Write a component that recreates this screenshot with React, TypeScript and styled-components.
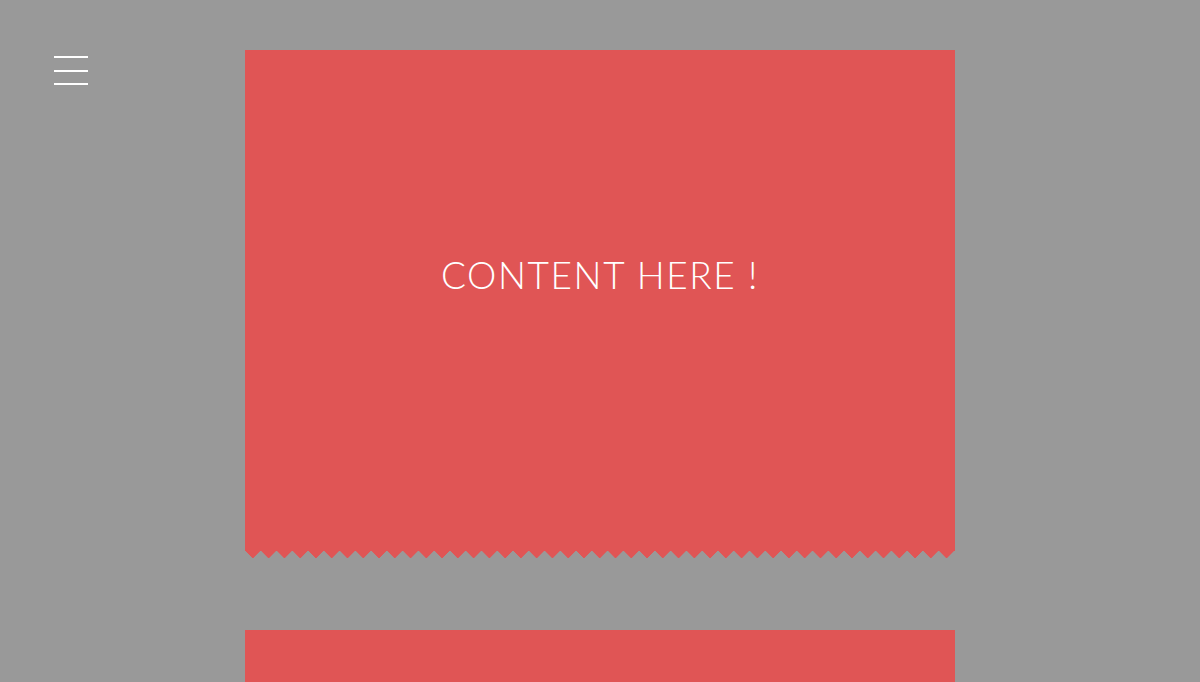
import React from "react";
import styled, { createGlobalStyle } from "styled-components";

const RED = "#e05555";

const GlobalStyle = createGlobalStyle`
  html, body {
    margin: 0;
    padding: 0;
    background: #999999;
    font-family: "Lato", "Open Sans", sans-serif;
  }
`;

const StyledPage = styled.main`
  display: flex;
  flex-direction: column;
  align-items: center;
  gap: 80px;
  padding-top: 50px;
  height: 682px;
  overflow: hidden;
  box-sizing: border-box;
`;

const StyledMenuButton = styled.button`
  position: fixed;
  top: 56px;
  left: 54px;
  width: 34px;
  padding: 0;
  border: 0;
  background: none;
  display: flex;
  flex-direction: column;
  gap: 11.5px;
  cursor: pointer;

  span {
    display: block;
    height: 2px;
    background: #fff;
  }
`;

const StyledCard = styled.section<{ $zigzag?: boolean }>`
  position: relative;
  flex-shrink: 0;
  width: 710px;
  height: 500px;
  background: ${RED};
  color: #fff;
  display: flex;
  justify-content: center;
  padding-top: 206px;
  box-sizing: border-box;

  &::after {
    content: "";
    display: ${(p) => (p.$zigzag ? "block" : "none")};
    position: absolute;
    left: 0;
    right: 0;
    top: 100%;
    height: 8px;
    background: conic-gradient(from -45deg at 50% 100%, ${RED} 90deg, transparent 0)
      repeat-x 0 0 / 15.78px 8px;
  }
`;

const StyledTitle = styled.h1`
  margin: 0;
  font-size: 37px;
  line-height: 1;
  font-weight: 300;
  letter-spacing: 1.6px;
  height: 37px;
`;

export default function App() {
  return (
    <>
      <GlobalStyle />
      <StyledMenuButton aria-label="menu">
        <span />
        <span />
        <span />
      </StyledMenuButton>
      <StyledPage>
        <StyledCard $zigzag>
          <StyledTitle>CONTENT HERE !</StyledTitle>
        </StyledCard>
        <StyledCard $zigzag />
      </StyledPage>
    </>
  );
}
